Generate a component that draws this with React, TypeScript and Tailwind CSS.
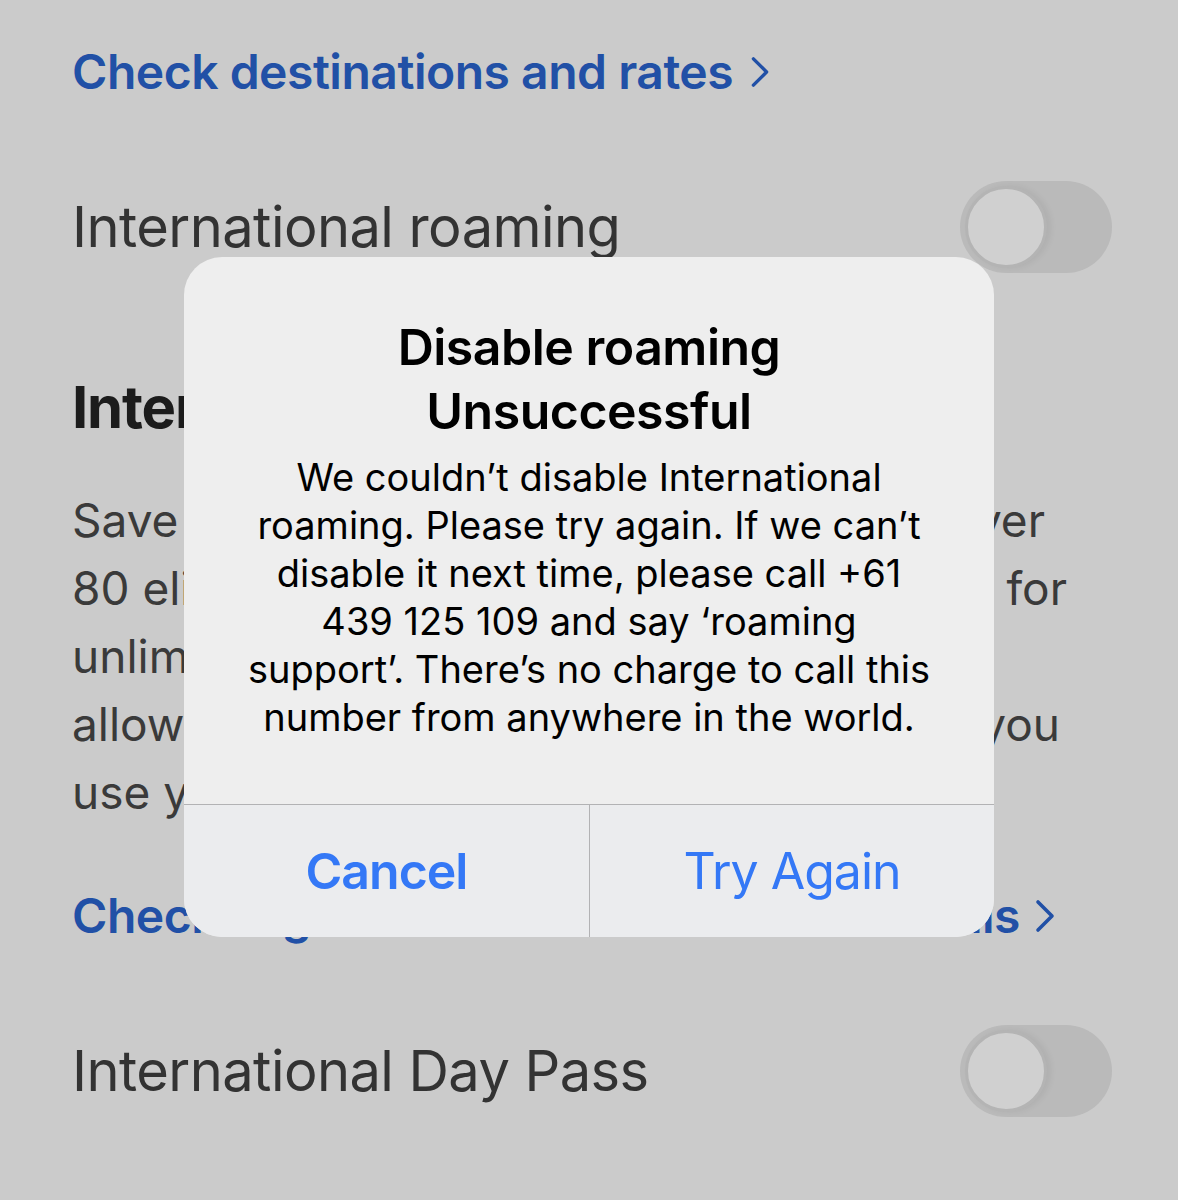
import React from "react"

function Chevron({ className }: { className?: string }) {
  return (
    <svg viewBox="0 0 22 34" className={className} fill="none" stroke="currentColor" strokeWidth={3.6} strokeLinecap="round" strokeLinejoin="round">
      <path d="M4 3 L18 17 L4 31" />
    </svg>
  )
}

function Toggle() {
  return (
    <div className="flex h-[92px] w-[152px] shrink-0 items-center rounded-full bg-[#bababa] pl-[5px]">
      <div className="size-[82px] rounded-full border-[3px] border-[#b4b4b4] bg-[#d0d0d0] shadow-[4px_0_6px_rgba(0,0,0,0.06)]" />
    </div>
  )
}

export default function App() {
  return (
    <div className="relative h-[1200px] w-[1178px] overflow-hidden bg-[#cbcbcb] font-['Inter',sans-serif]">
      {/* settings page behind the alert */}
      <div className="flex flex-col pl-[72px] pr-[66px] pt-[42px]">
        <div className="flex h-[60px] items-center gap-[16px] text-[48px] font-semibold leading-[60px] tracking-[-0.01em] text-[#2150a6]">
          <span>Check destinations and rates</span>
          <Chevron className="h-[32px] w-[22px]" />
        </div>

        <div className="mt-[79px] flex h-[92px] items-center justify-between">
          <span className="text-[56px] leading-[68px] tracking-[-0.01em] text-[#333333]">International roaming</span>
          <Toggle />
        </div>

        <h2 className="mt-[99px] text-[58px] font-bold leading-[70px] tracking-[-0.02em] text-[#1c1c1c]">International Day Pass</h2>

        <div className="mt-[44px] flex flex-col text-[46px] leading-[68px] text-[#3a3a3a]">
          <p className="flex w-[973px] justify-between">
            <span>Save with International Day Pass. In</span>
            <span>over</span>
          </p>
          <p className="flex w-[995px] justify-between">
            <span>80 eligible destinations, pay a daily fee</span>
            <span>for</span>
          </p>
          <p>unlimited talk and text, plus your data</p>
          <p className="flex w-[988px] justify-between">
            <span>allowance, only on the days that</span>
            <span>you</span>
          </p>
          <p>use your phone overseas.</p>
        </div>

        <div className="mt-[60px] flex h-[60px] items-center gap-[14px] text-[48px] font-semibold leading-[60px] tracking-[-0.01em] text-[#2150a6]">
          <span className="flex w-[948px] justify-between">
            <span>Check eligible destinations and</span>
            <span>details</span>
          </span>
          <Chevron className="h-[34px] w-[22px]" />
        </div>

        <div className="mt-[79px] flex h-[92px] items-center justify-between">
          <span className="text-[56px] leading-[68px] tracking-[-0.01em] text-[#333333]">International Day Pass</span>
          <Toggle />
        </div>
      </div>

      {/* alert */}
      <div className="absolute left-[184px] top-[257px] flex w-[810px] flex-col overflow-hidden rounded-[38px] bg-[#eeeeee] text-center text-black">
        <div className="flex flex-col px-[30px] pb-[63px] pt-[58px]">
          <h1 className="text-[50px] font-semibold leading-[64px] tracking-[-0.01em]">
            Disable roaming
            <br />
            Unsuccessful
          </h1>
          <p className="mt-[10px] text-[38px] leading-[48px]">
            We couldn’t disable International
            <br />
            roaming. Please try again. If we can’t
            <br />
            disable it next time, please call +61
            <br />
            439 125 109 and say ‘roaming
            <br />
            support’. There’s no charge to call this
            <br />
            number from anywhere in the world.
          </p>
        </div>
        <div className="grid h-[133px] grid-cols-2 border-t border-[#b2b2b4] bg-[#ebecee] text-[50px] leading-[60px] tracking-[-0.02em] text-[#3478f6]">
          <button className="flex items-center justify-center font-semibold">Cancel</button>
          <button className="flex items-center justify-center border-l border-[#b2b2b4]">Try Again</button>
        </div>
      </div>
    </div>
  )
}
